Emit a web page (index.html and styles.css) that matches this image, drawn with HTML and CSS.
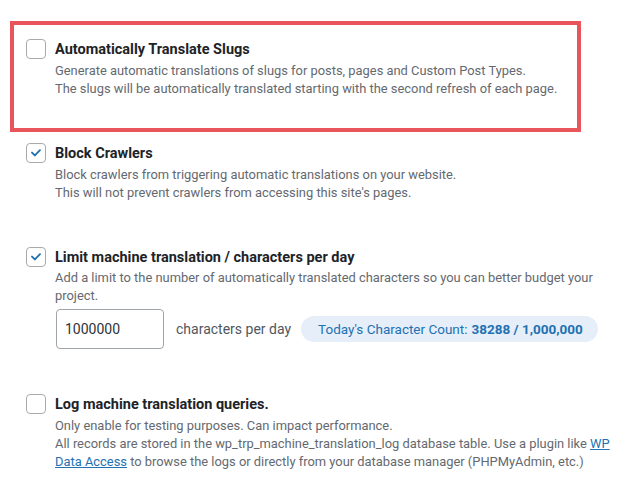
FILE: index.html
```html
<!DOCTYPE html>
<html lang="en">
<head>
<meta charset="utf-8">
<title>Advanced settings</title>
<link rel="stylesheet" href="styles.css">
</head>
<body>
<div class="page">
  <div class="highlight">
    <div class="option">
      <label class="head">
        <span class="cb"></span>
        <span class="title">Automatically Translate Slugs</span>
      </label>
      <p class="desc">Generate automatic translations of slugs for posts, pages and Custom Post Types.<br>The slugs will be automatically translated starting with the second refresh of each page.</p>
    </div>
  </div>

  <div class="option plain first">
    <label class="head">
      <span class="cb checked"><svg viewBox="0 0 20 20" width="20" height="20"><polyline points="6,9.6 8.9,12.4 14,7.2" fill="none" stroke="#2271b1" stroke-width="1.9" stroke-linecap="round" stroke-linejoin="round"/></svg></span>
      <span class="title">Block Crawlers</span>
    </label>
    <p class="desc">Block crawlers from triggering automatic translations on your website.<br>This will not prevent crawlers from accessing this site's pages.</p>
  </div>

  <div class="option plain">
    <label class="head">
      <span class="cb checked"><svg viewBox="0 0 20 20" width="20" height="20"><polyline points="6,9.6 8.9,12.4 14,7.2" fill="none" stroke="#2271b1" stroke-width="1.9" stroke-linecap="round" stroke-linejoin="round"/></svg></span>
      <span class="title">Limit machine translation / characters per day</span>
    </label>
    <p class="desc tight">Add a limit to the number of automatically translated characters so you can better budget your<br>project.</p>
    <div class="limit-row">
      <input class="num" type="text" value="1000000">
      <span class="unit">characters per day</span>
      <span class="pill">Today's Character Count: <b>38288 / 1,000,000</b></span>
    </div>
  </div>

  <div class="option plain">
    <label class="head">
      <span class="cb"></span>
      <span class="title">Log machine translation queries.</span>
    </label>
    <p class="desc">Only enable for testing purposes. Can impact performance.<br>All records are stored in the wp_trp_machine_translation_log database table. Use a plugin like <a href="#">WP<br>Data Access</a> to browse the logs or directly from your database manager (PHPMyAdmin, etc.)</p>
  </div>
</div>
</body>
</html>
```

FILE: styles.css
```css
* { box-sizing: border-box; }

html, body {
  margin: 0;
  background: #ffffff;
}

body {
  font-family: Roboto, "Liberation Sans", sans-serif;
  color: #1d2327;
  width: 634px;
  height: 498px;
  overflow: hidden;
}

.page {
  padding-top: 21px;
}

.highlight {
  margin-left: 10px;
  width: 571px;
  height: 111px;
  border: 4px solid #e8565c;
  padding: 14px 12px 0 12px;
}

.option.plain {
  margin-left: 26px;
  margin-top: 45px;
}

.option.plain.first {
  margin-top: 11px;
}

.head {
  display: flex;
  align-items: center;
  gap: 9px;
  height: 20px;
}

.cb {
  width: 20px;
  height: 20px;
  flex: none;
  border: 1px solid #a7aaad;
  border-radius: 4px;
  background: #fff;
  display: flex;
  align-items: center;
  justify-content: center;
}

.cb svg {
  display: block;
  margin: -1px;
}

.title {
  font-weight: 700;
  font-size: 14.5px;
  color: #1d2327;
}

.desc {
  margin: 3px 0 0 29px;
  font-size: 12.9px;
  line-height: 18px;
  color: #646970;
  white-space: nowrap;
}

.desc.tight {
  margin-top: 2px;
}

.desc a {
  color: #2271b1;
  text-decoration: underline;
}

.limit-row {
  display: flex;
  align-items: center;
  margin: 4px 0 0 30px;
}

.num {
  width: 108px;
  height: 40px;
  border: 1px solid #a0a5aa;
  border-radius: 4px;
  padding: 0 8px;
  font-family: Roboto, "Liberation Sans", sans-serif;
  font-size: 14px;
  color: #2c3338;
  background: #fff;
  outline: none;
}

.unit {
  margin-left: 12px;
  font-size: 14px;
  color: #50575e;
}

.pill {
  margin-left: 10px;
  height: 26px;
  display: flex;
  align-items: center;
  padding: 0 15px 0 17px;
  border-radius: 13px;
  background: #e6eefa;
  color: #2271b1;
  font-size: 13.5px;
  white-space: nowrap;
}

.pill b {
  font-weight: 700;
  margin-left: 4px;
}
```
